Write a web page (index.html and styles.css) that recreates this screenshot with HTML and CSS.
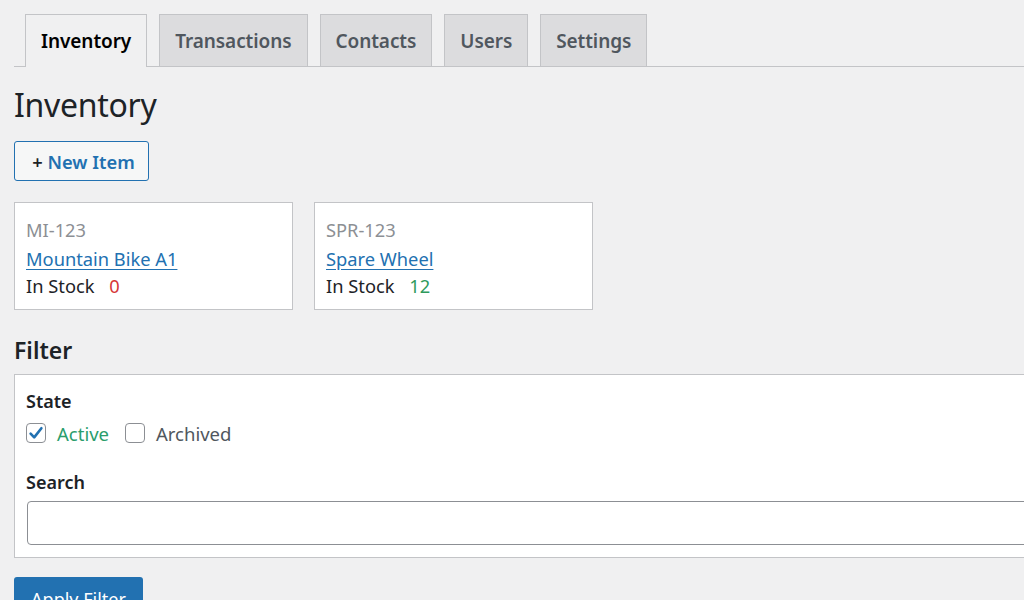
FILE: index.html
```html
<!DOCTYPE html>
<html lang="en">
<head>
<meta charset="utf-8">
<title>Inventory</title>
<link rel="stylesheet" href="styles.css">
</head>
<body>
<div class="wrap">
  <nav class="tabs">
    <a class="tab active">Inventory</a>
    <a class="tab">Transactions</a>
    <a class="tab">Contacts</a>
    <a class="tab">Users</a>
    <a class="tab">Settings</a>
  </nav>
  <h1 class="title">Inventory</h1>
  <button class="btn-new"><span class="plus">+</span> New Item</button>
  <div class="cards">
    <div class="card">
      <div class="sku">MI-123</div>
      <a class="name" href="#">Mountain Bike A1</a>
      <div class="stock">In Stock <span class="qty zero">0</span></div>
    </div>
    <div class="card">
      <div class="sku">SPR-123</div>
      <a class="name" href="#">Spare Wheel</a>
      <div class="stock">In Stock <span class="qty ok">12</span></div>
    </div>
  </div>
  <h2 class="subtitle">Filter</h2>
  <div class="filter">
    <div class="label">State</div>
    <div class="checks">
      <label class="check on"><span class="box"><svg viewBox="0 0 20 20" width="20" height="20"><path d="M4.6 10.6 L8.2 14.4 L15.4 5.2" fill="none" stroke="#2271b1" stroke-width="2.6" stroke-linecap="round" stroke-linejoin="round"/></svg></span>Active</label>
      <label class="check"><span class="box"></span>Archived</label>
    </div>
    <div class="label search-label">Search</div>
    <div class="input"></div>
  </div>
  <button class="btn-apply">Apply Filter</button>
</div>
</body>
</html>
```
FILE: styles.css
```css
html, body {
  margin: 0;
  padding: 0;
  overflow: hidden;
  background: #f0f0f1;
}
body {
  font-family: "Noto Sans", "Open Sans", sans-serif;
  color: #1d2327;
  font-size: 18px;
}
.wrap {
  padding: 14px 0 0 14px;
}
.tabs {
  display: flex;
  gap: 12px;
  padding-left: 11px;
  border-bottom: 1px solid #c3c4c7;
  height: 52px;
  align-items: stretch;
}
.tab {
  display: flex;
  align-items: center;
  padding: 0 15px;
  font-size: 19px;
  font-weight: 600;
  color: #50575e;
  background: #dcdcde;
  border: 1px solid #c3c4c7;
  border-bottom: none;
  box-sizing: border-box;
  letter-spacing: -0.08px;
}
.tab.active {
  background: #f0f0f1;
  color: #000;
  margin-bottom: -1px;
}
.title {
  font-size: 32px;
  font-weight: 400;
  margin: 18px 0 0 0;
  line-height: 40px;
  letter-spacing: -0.3px;
}
.btn-new {
  margin-top: 16px;
  display: block;
  height: 40px;
  width: 135px;
  border: 1px solid #2271b1;
  border-radius: 3px;
  background: #f6f7f7;
  color: #2271b1;
  font-family: inherit;
  font-size: 18.3px;
  font-weight: 600;
  padding: 0 0 0 4px;
  text-align: center;
}
.btn-new .plus {
  color: #1d2327;
}
.cards {
  display: flex;
  gap: 21px;
  margin-top: 21px;
}
.card {
  width: 279px;
  height: 108px;
  box-sizing: border-box;
  background: #fff;
  border: 1px solid #c3c4c7;
  padding: 12px 11px 0;
  line-height: 29px;
  font-size: 18.3px;
}
.sku {
  color: #8c8f94;
}
.name {
  display: block;
  color: #2271b1;
  text-decoration: underline;
  text-underline-offset: 3px;
}
.stock {
  color: #1d2327;
  margin-top: -2px;
}
.qty {
  margin-left: 10px;
}
.zero { color: #d63638; }
.ok { color: #2e9a5c; }
.subtitle {
  font-size: 23px;
  font-weight: 600;
  margin: 24px 0 0 0;
  line-height: 32px;
}
.filter {
  margin-top: 8px;
  width: 1060px;
  height: 184px;
  box-sizing: border-box;
  background: #fff;
  border: 1px solid #c3c4c7;
  padding: 13px 11px 0;
}
.label {
  font-weight: 600;
  line-height: 26px;
}
.checks {
  display: flex;
  align-items: center;
  margin-top: 9px;
  height: 20px;
  font-size: 18.5px;
}
.check {
  display: flex;
  align-items: center;
  color: #50575e;
  margin-right: 16px;
}
.check.on {
  color: #2a9d6c;
}
.box {
  width: 20px;
  height: 20px;
  box-sizing: border-box;
  border: 1px solid #8c8f94;
  border-radius: 4px;
  margin-right: 11px;
  display: flex;
  position: relative;
}
.box svg {
  position: absolute;
  left: -1px;
  top: -1px;
}
.search-label {
  margin-top: 26px;
}
.input {
  margin-top: 6px;
  margin-left: 1px;
  height: 44px;
  box-sizing: border-box;
  border: 1px solid #8c8f94;
  border-radius: 4px;
  background: #fff;
}
.btn-apply {
  display: block;
  margin-top: 19px;
  width: 129px;
  height: 44px;
  border: none;
  border-radius: 3px;
  background: #2271b1;
  color: #fff;
  font-family: inherit;
  font-size: 18px;
  padding: 0;
}
```
